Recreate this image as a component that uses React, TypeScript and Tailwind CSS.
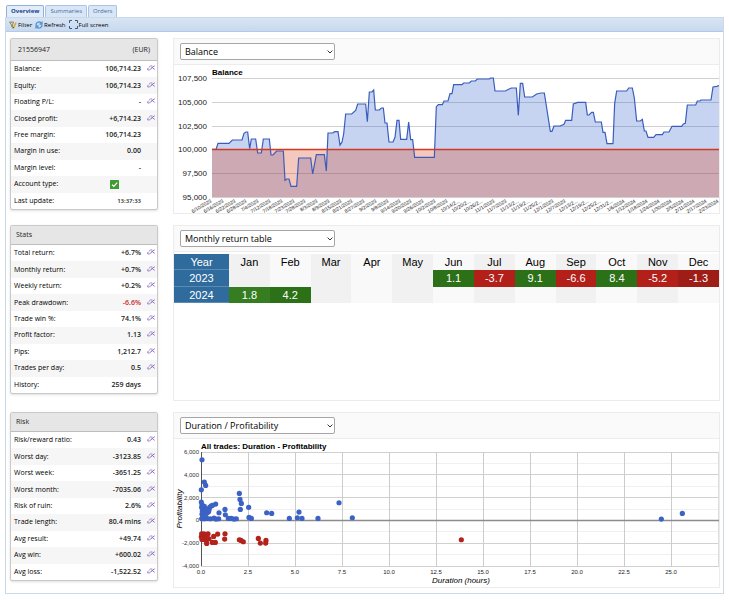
import React from "react";

type Row = { label: string; value: string; plain?: boolean; check?: boolean; negative?: boolean; small?: boolean };
type Point = [number, number];

const accountRows: Row[] = [
  { label: "Balance:", value: "106,714.23" },
  { label: "Equity:", value: "106,714.23" },
  { label: "Floating P/L:", value: "-" },
  { label: "Closed profit:", value: "+6,714.23" },
  { label: "Free margin:", value: "106,714.23", plain: true },
  { label: "Margin in use:", value: "0.00", plain: true },
  { label: "Margin level:", value: "-", plain: true },
  { label: "Account type:", value: "", check: true, plain: true },
  { label: "Last update:", value: "13:37:33", small: true, plain: true },
];

const statsRows: Row[] = [
  { label: "Total return:", value: "+6.7%" },
  { label: "Monthly return:", value: "+0.7%" },
  { label: "Weekly return:", value: "+0.2%" },
  { label: "Peak drawdown:", value: "-6.6%", negative: true },
  { label: "Trade win %:", value: "74.1%" },
  { label: "Profit factor:", value: "1.13" },
  { label: "Pips:", value: "1,212.7" },
  { label: "Trades per day:", value: "0.5" },
  { label: "History:", value: "259 days", plain: true },
];

const riskRows: Row[] = [
  { label: "Risk/reward ratio:", value: "0.43" },
  { label: "Worst day:", value: "-3123.85" },
  { label: "Worst week:", value: "-3651.25" },
  { label: "Worst month:", value: "-7035.06" },
  { label: "Risk of ruin:", value: "2.6%" },
  { label: "Trade length:", value: "80.4 mins" },
  { label: "Avg result:", value: "+49.74" },
  { label: "Avg win:", value: "+600.02" },
  { label: "Avg loss:", value: "-1,522.52" },
];

const months = ["Jan", "Feb", "Mar", "Apr", "May", "Jun", "Jul", "Aug", "Sep", "Oct", "Nov", "Dec"];
const years: { year: string; values: (string | null)[] }[] = [
  { year: "2023", values: [null, null, null, null, null, "1.1", "-3.7", "9.1", "-6.6", "8.4", "-5.2", "-1.3"] },
  { year: "2024", values: ["1.8", "4.2", null, null, null, null, null, null, null, null, null, null] },
];

const dateLabels = [
  "6/10/2023", "6/16/2023", "6/22/2023", "6/28/2023", "7/4/2023", "7/12/2023", "7/18/2023", "7/23/2023", "7/28/2023",
  "8/3/2023", "8/9/2023", "8/15/2023", "8/21/2023", "8/27/2023", "9/2/2023", "9/8/2023", "9/14/2023", "9/20/2023",
  "9/26/2023", "10/2/2023", "10/8/2023", "10/14/2...", "10/20/2...", "10/26/2...", "11/1/2023", "11/7/2023",
  "11/13/2...", "11/19/2...", "11/25/2...", "12/1/2023", "12/7/2023", "12/13/2...", "12/19/2...", "12/25/2...",
  "12/31/2...", "1/6/2024", "1/12/2024", "1/18/2024", "1/24/2024", "1/30/2024", "2/5/2024", "2/11/2024", "2/17/2024",
  "2/23/2024",
];

// Plot positions in thirds of a unit, measured from the top left of the plot area.
const balance: Point[] = [
  [0, 214], [12, 214], [18, 196], [51, 196], [61, 186], [90, 186], [96, 166], [102, 162], [107, 162], [113, 212],
  [118, 183], [131, 183], [137, 225], [148, 225], [154, 183], [172, 183], [177, 231], [183, 231], [194, 219],
  [214, 219], [219, 307], [224, 303], [231, 303], [237, 325], [254, 325], [260, 240], [296, 240], [302, 288],
  [313, 230], [337, 230], [343, 279], [348, 165], [362, 165], [368, 161], [378, 161], [384, 201], [390, 192],
  [395, 168], [401, 108], [419, 108], [431, 97], [437, 78], [461, 78], [466, 131], [472, 42], [480, 42], [485, 36],
  [490, 96], [502, 96], [508, 90], [514, 90], [519, 135], [525, 135], [531, 192], [543, 192], [549, 178], [555, 127],
  [561, 127], [566, 184], [584, 184], [590, 132], [596, 185], [602, 185], [608, 238], [667, 238], [673, 86],
  [679, 80], [691, 80], [696, 69], [708, 69], [714, 47], [720, 47], [725, 20], [750, 20], [755, 15], [772, 15],
  [778, 9], [790, 9], [796, 3], [832, 3], [836, 0], [844, 0], [849, 39], [880, 39], [890, 34], [898, 30], [913, 30],
  [919, 112], [925, 16], [932, 16], [938, 57], [961, 57], [974, 48], [987, 45], [997, 45], [1015, 160], [1020, 160],
  [1026, 144], [1044, 144], [1056, 139], [1061, 127], [1079, 127], [1084, 78], [1097, 73], [1121, 73], [1126, 111],
  [1131, 111], [1139, 103], [1144, 103], [1150, 132], [1168, 132], [1173, 163], [1179, 163], [1185, 197],
  [1203, 197], [1208, 76], [1214, 39], [1244, 39], [1250, 30], [1261, 30], [1267, 60], [1274, 129], [1285, 129],
  [1291, 124], [1297, 159], [1302, 159], [1308, 178], [1325, 178], [1332, 170], [1351, 170], [1356, 162],
  [1371, 162], [1380, 145], [1409, 145], [1414, 138], [1420, 136], [1426, 81], [1451, 81], [1456, 69], [1464, 69],
  [1467, 66], [1497, 66], [1503, 27], [1514, 25], [1521, 23],
];

// Trades in thirds of a unit from the origin of the axes, y growing downwards.
const wins: Point[] = [
  [3, -182], [10, -115], [14, -105], [1, -92], [115, -81], [117, -63], [121, -51], [118, -33], [143, -39], [44, -49],
  [72, -33], [54, -23], [73, -17], [197, -23], [212, -21], [294, -25], [265, -6], [289, -8], [303, -6], [351, -6],
  [414, -53], [454, -8], [144, -9], [151, -6], [82, -6], [91, -6], [99, -4], [106, -5], [53, -5], [45, -4], [39, -7],
  [28, -5], [18, -6], [10, -5], [2, -5], [1, -55], [3, -47], [2, -39], [4, -29], [3, -19], [5, -11], [10, -42],
  [12, -33], [11, -23], [13, -14], [18, -33], [19, -23], [24, -33], [26, -39], [30, -43], [23, -27], [34, -45],
  [1381, -4], [1444, -21],
];
const losses: Point[] = [
  [2, 40], [1, 49], [3, 57], [9, 40], [11, 50], [10, 57], [16, 43], [18, 51], [16, 60], [21, 40], [24, 55], [17, 69],
  [38, 48], [50, 41], [72, 40], [71, 56], [34, 66], [43, 66], [115, 58], [120, 60], [127, 64], [172, 54], [178, 68],
  [195, 60], [194, 68], [781, 58],
];

function TrendIcon() {
  return (
    <svg viewBox="0 0 24 18" className="h-[6px] w-[8px]" fill="none" strokeWidth="2.6" aria-hidden="true">
      <path d="M5 8 L10 3 H16 M3 9 L2 15 H8 L17 5" stroke="#9275bd" />
      <path d="M13 11 L22 2 M17 9 L23 13" stroke="#7a63b8" />
      <path d="M20 4 L24 3" stroke="#c98aa8" strokeWidth="2" />
    </svg>
  );
}

function StatPanel({ title, extra, rows }: { title: string; extra?: string; rows: Row[] }) {
  return (
    <section className="overflow-hidden rounded-[2px] border border-[#c9c9c9] bg-white shadow-sm">
      <h2
        className={`flex items-center justify-between border-b border-[#bdbdbd] bg-[#e6e6e6] text-[7px] text-[#222] ${
          extra ? "h-[22px] px-[7px]" : "h-[19px] px-[5px]"
        }`}
      >
        <span>{title}</span>
        {extra && <span>{extra}</span>}
      </h2>
      <dl className="grid h-[148px] auto-rows-fr">
        {rows.map((r) => (
          <div key={r.label} className="flex items-center pr-[2px] pl-[3px] even:bg-[#f6f6f6]">
            <dt className="flex-1 font-medium whitespace-nowrap">{r.label}</dt>
            {r.check ? (
              <dd className="mr-[36px]">
                <svg viewBox="0 0 9 9" className="size-[9px]" role="img" aria-label="Verified">
                  <rect width="9" height="9" rx="0.6" fill="#3f9b35" />
                  <path d="M2 4.6 L3.8 6.4 L7.2 2.6" stroke="#fff" strokeWidth="1.3" fill="none" />
                </svg>
              </dd>
            ) : (
              <dd className={`font-semibold ${r.small ? "text-[6px]" : ""} ${r.negative ? "text-[#c8261e]" : "text-[#222]"}`}>
                {r.value}
              </dd>
            )}
            {!r.check && <span className="mb-[2px] ml-[6px] w-[8px]">{!r.plain && <TrendIcon />}</span>}
          </div>
        ))}
      </dl>
    </section>
  );
}

function ChartPanel({ option, children }: { option: string; children: React.ReactNode }) {
  return (
    <section className="border border-[#ececec] bg-white">
      <div className="flex h-[26px] items-center border-b border-[#ececec] bg-[#fafafa] px-[6px]">
        <div className="relative w-[155px]">
          <select
            aria-label="Chart"
            className="block h-[17px] w-full appearance-none rounded-[2px] border border-[#a6a6a6] bg-white px-[4px] text-[9px] leading-[14px] text-black"
          >
            <option>{option}</option>
          </select>
          <svg viewBox="0 0 6 4" className="pointer-events-none absolute top-[7px] right-[2px] h-[4px] w-[6px]" fill="none">
            <path d="M0.6 0.6 L3 3 L5.4 0.6" stroke="#333" strokeWidth="1" />
          </svg>
        </div>
      </div>
      {children}
    </section>
  );
}

function BalanceChart() {
  const left = 38;
  const top = 13;
  const step = 23.8;
  const right = 545;
  const bottom = 132;
  const base = 84.5;
  const line = balance.map(([x, y]) => `${left + x / 3},${top + y / 3}`).join(" ");
  return (
    <svg viewBox="0 0 545 148" className="block w-full font-['Liberation_Sans',sans-serif]" role="img" aria-label="Balance chart">
      {["107,500", "105,000", "102,500", "100,000", "97,500", "95,000"].map((t, i) => {
        const y = Math.round(top + i * step);
        return (
          <g key={t}>
            <path d={`M${left} ${y + 0.5}H${right}`} stroke="#d0d0d0" />
            <text x={33} y={y + 3} fontSize="8" textAnchor="end" fill="#222">
              {t}
            </text>
          </g>
        );
      })}
      <text x={left} y={10} fontSize="8" fontWeight="bold">
        Balance
      </text>
      <polygon points={`${left},${bottom} ${line} ${right},${bottom}`} fill="#3366cc" fillOpacity="0.28" />
      <rect x={left} y={base} width={right - left} height={bottom - base} fill="#dc3912" fillOpacity="0.28" />
      <polyline points={line} fill="none" stroke="#3a5dbd" strokeWidth="1.2" />
      <path d={`M${left} ${base}H${right}`} stroke="#cf3a24" strokeWidth="1.6" />
      {dateLabels.map((t, i) => {
        const x = Math.round(left + (i * (right - left)) / (dateLabels.length - 1));
        return (
          <text key={t} x={x} y={bottom + 5} fontSize="5" textAnchor="end" fill="#111" transform={`rotate(-30 ${x} ${bottom + 5})`}>
            {t}
          </text>
        );
      })}
    </svg>
  );
}

function ReturnTable() {
  return (
    <div className="h-[148px] pt-[2px]">
      <table className="h-[49px] w-full table-fixed border-collapse text-center font-['Liberation_Sans',sans-serif] text-[11px] leading-[16px]">
        <thead>
          <tr>
            <th className="w-[55px] bg-[#2f6b9c] p-0 font-normal text-white shadow-[inset_0_-1px_0_#5b8ab3]">Year</th>
            {months.map((m) => (
              <th key={m} className="bg-[#f9f9f9] p-0 font-normal even:bg-[#f1f1f1]">
                {m}
              </th>
            ))}
          </tr>
        </thead>
        <tbody>
          {years.map((y) => (
            <tr key={y.year}>
              <th className="bg-[#2f6b9c] p-0 font-normal text-white shadow-[inset_0_-1px_0_#5b8ab3]">{y.year}</th>
              {y.values.map((v, i) => (
                <td
                  key={months[i]}
                  className={`p-0 ${
                    v === null
                      ? "bg-[#f9f9f9] even:bg-[#f1f1f1]"
                      : v.startsWith("-")
                        ? "bg-[#b3201a] text-white last:bg-[#9f1d17]"
                        : v === "1.8"
                          ? "bg-[#357d20] text-white"
                          : "bg-[#2c7018] text-white"
                  }`}
                >
                  {v}
                </td>
              ))}
            </tr>
          ))}
        </tbody>
      </table>
    </div>
  );
}

function ScatterChart() {
  const left = 27;
  const top = 13;
  const right = 545;
  const bottom = 127;
  const row = (bottom - top) / 5;
  const zero = top + row * 3;
  return (
    <svg viewBox="0 0 545 148" className="block w-full font-['Liberation_Sans',sans-serif]" role="img" aria-label="Duration and profitability of all trades">
      {["6,000", "4,000", "2,000", "0", "-2,000", "-4,000"].map((t, i) => (
        <g key={t}>
          {i < 5 && <path d={`M${left} ${Math.floor(top + (i + 0.5) * row) + 0.5}H${right}`} stroke="#f0f0f0" />}
          <path d={`M${left} ${Math.floor(top + i * row) + 0.5}H${right}`} stroke="#d0d0d0" />
          <text x={left - 2} y={Math.round(top + 2 + i * row)} fontSize="6" textAnchor="end" fill="#333">
            {t}
          </text>
        </g>
      ))}
      {["0.0", "2.5", "5.0", "7.5", "10.0", "12.5", "15.0", "17.5", "20.0", "22.5", "25.0"].map((t, i) => (
        <g key={t}>
          <path d={`M${left + 0.5 + i * 47} ${top}V${bottom}`} stroke={i === 0 ? "#555" : "#ccc"} />
          <text x={left + i * 47} y={bottom + 8} fontSize="6" textAnchor="middle" fill="#222">
            {t}
          </text>
        </g>
      ))}
      <path d={`M${right - 0.5} ${top}V${bottom}`} stroke="#ddd" />
      <path d={`M${left} ${Math.floor(zero) + 0.5}H${right}`} stroke="#8c8c8c" strokeWidth="1.6" />
      <text x={left} y={10} fontSize="8" fontWeight="bold">
        All trades: Duration - Profitability
      </text>
      <text x={287} y={144} fontSize="8" fontStyle="italic" textAnchor="middle">
        Duration (hours)
      </text>
      <text x={8} y={70} fontSize="8" fontStyle="italic" textAnchor="middle" transform="rotate(-90 8 70)">
        Profitability
      </text>
      {wins.map(([x, y], i) => (
        <circle key={i} cx={left + x / 3} cy={zero + y / 3} r="2.6" fill="#3b62c4" />
      ))}
      {losses.map(([x, y], i) => (
        <circle key={i} cx={left + x / 3} cy={zero + y / 3} r="2.6" fill="#b3221b" />
      ))}
    </svg>
  );
}

function Tab({ label, active }: { label: string; active?: boolean }) {
  return (
    <button
      type="button"
      role="tab"
      aria-selected={!!active}
      className={`rounded-t-[2px] border border-b-0 px-[4px] text-[6px] leading-[11px] ${
        active ? "border-[#8fb1dd] bg-[#e3edf9] font-bold text-[#15428b]" : "border-[#a9c4e6] bg-[#d9e6f6] text-[#416aa3]"
      }`}
    >
      {label}
    </button>
  );
}

export default function App() {
  return (
    <div className="bg-white px-[5px] pt-[5px] font-['Open_Sans','Noto_Sans',sans-serif] text-[7px] leading-[10px] text-black">
      <div role="tablist" className="flex gap-px px-px">
        <Tab label="Overview" active />
        <Tab label="Summaries" />
        <Tab label="Orders" />
      </div>
      <main className="border border-[#c9d9ea]">
        <div className="flex h-[14px] items-center gap-[3px] border-b border-[#b5cae4] bg-linear-to-b from-[#d8e4f3] to-[#c8d9ee] px-[3px] text-[6px]">
          <button type="button" className="flex items-center gap-px">
            <svg viewBox="0 0 16 16" className="size-[8px]" fill="none" aria-hidden="true">
              <path d="M1 2 H9 L7 8 V13 L5 11 V8 Z" fill="#d9d3a8" stroke="#6f6b4c" strokeWidth="1.4" />
              <path d="M9 14 L14 3" stroke="#d9a920" strokeWidth="3" />
              <path d="M8 15 L9.5 12" stroke="#665522" strokeWidth="2" />
            </svg>
            Filter
          </button>
          <button type="button" className="flex items-center gap-px">
            <svg viewBox="0 0 16 16" className="size-[8px]" fill="none" stroke="#4a8fd6" strokeWidth="2.6" aria-hidden="true">
              <path d="M2 8 A6 6 0 0 1 12 3.5 M14 1 V6 H9" />
              <path d="M14 8 A6 6 0 0 1 4 12.5 M2 15 V10 H7" />
            </svg>
            Refresh
          </button>
          <button type="button" className="flex items-center gap-px">
            <svg viewBox="0 0 9 9" className="size-[9px]" fill="none" stroke="#2d5f94" strokeWidth="1" aria-hidden="true">
              <path d="M0.5 3 V0.5 H3 M6 0.5 H8.5 V3 M8.5 6 V8.5 H6 M3 8.5 H0.5 V6" />
            </svg>
            Full screen
          </button>
        </div>
        <div className="grid grid-cols-[148px_minmax(0,1fr)] gap-x-[15px] gap-y-[11px] pt-[6px] pr-[3px] pb-[5px] pl-[4px]">
          <div>
            <StatPanel title="21556947" extra="(EUR)" rows={accountRows} />
          </div>
          <ChartPanel option="Balance">
            <BalanceChart />
          </ChartPanel>
          <div>
            <StatPanel title="Stats" rows={statsRows} />
          </div>
          <ChartPanel option="Monthly return table">
            <ReturnTable />
          </ChartPanel>
          <div>
            <StatPanel title="Risk" rows={riskRows} />
          </div>
          <ChartPanel option="Duration / Profitability">
            <ScatterChart />
          </ChartPanel>
        </div>
      </main>
    </div>
  );
}
